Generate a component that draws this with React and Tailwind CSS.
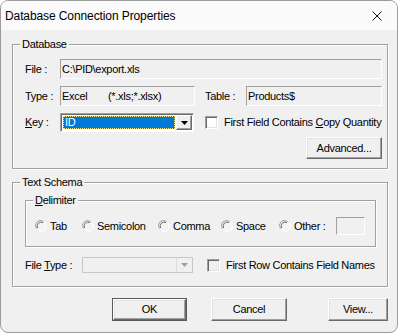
import React from 'react';

const FONT = "font-['Liberation_Sans',Arial,sans-serif]";

function Sunken({ className = '', children }) {
  return (
    <div className={`flex items-center border border-t-[#a0a0a0] border-l-[#a0a0a0] border-b-white border-r-white bg-[#f0f0f0] px-[1px] ${className}`}>
      {children}
    </div>
  );
}

function Button({ label, isDefault, className = '' }) {
  const inner = (
    <div className="flex h-full w-full items-center justify-center border border-t-white border-l-white border-r-[#696969] border-b-[#696969] bg-[#f0f0f0] shadow-[inset_-1px_-1px_0_#a0a0a0,inset_1px_1px_0_#e3e3e3]">
      {label}
    </div>
  );
  if (isDefault) {
    return <div className={`border border-[#5a5a5a] ${className}`}>{inner}</div>;
  }
  return <div className={className}>{inner}</div>;
}

function Check({ disabled }) {
  return (
    <div className={`h-[13px] w-[13px] shrink-0 border border-t-[#a0a0a0] border-l-[#a0a0a0] border-b-white border-r-white shadow-[inset_1px_1px_0_#696969,inset_-1px_-1px_0_#e3e3e3] ${disabled ? 'bg-[#f0f0f0]' : 'bg-white'}`} />
  );
}

function Radio() {
  return (
    <svg width="12" height="12" viewBox="0 0 12 12" className="shrink-0">
      <circle cx="6" cy="6" r="5" fill="#f4f4f4" />
      <path d="M1.5 8.5 A5 5 0 0 1 8.5 1.5" fill="none" stroke="#a0a0a0" strokeWidth="1" />
      <path d="M2.6 8 A4 4 0 0 1 8 2.6" fill="none" stroke="#696969" strokeWidth="1" />
      <path d="M10.5 3.5 A5 5 0 0 1 3.5 10.5" fill="none" stroke="#ffffff" strokeWidth="1" />
    </svg>
  );
}

function Group({ title, className = '', children }) {
  return (
    <div className={`relative border border-[#a0a0a0] shadow-[inset_1px_1px_0_#fff,1px_1px_0_#fff] ${className}`}>
      <span className="absolute left-[7px] top-[-8px] bg-[#f0f0f0] px-[2px] leading-[14px]">{title}</span>
      {children}
    </div>
  );
}

function Arrow({ disabled }) {
  return (
    <div className="flex h-full w-[16px] items-center justify-center border border-t-white border-l-white border-r-[#696969] border-b-[#696969] bg-[#f0f0f0] shadow-[inset_-1px_-1px_0_#a0a0a0]">
      <svg width="7" height="4" viewBox="0 0 7 4">
        <path d="M0 0 H7 L3.5 4 Z" fill={disabled ? '#a0a0a0' : '#000'} />
      </svg>
    </div>
  );
}

export default function App() {
  return (
    <div className={`flex h-[333px] w-[398px] flex-col overflow-hidden rounded-[8px] border border-[#9c9c9c] bg-[#f0f0f0] text-[11px] tracking-[-0.3px] text-black ${FONT}`}>
      {/* title bar */}
      <div className="flex h-[29px] shrink-0 items-center justify-between bg-[#fafafa] pl-[4px] pr-[15px]">
        <span className="text-[12px] tracking-[-0.1px]">Database Connection Properties</span>
        <svg width="10" height="10" viewBox="0 0 10 10">
          <path d="M0.5 0.5 L9.5 9.5 M9.5 0.5 L0.5 9.5" stroke="#1a1a1a" strokeWidth="1" />
        </svg>
      </div>

      <div className="pl-[11px]">
        {/* Database */}
        <Group title="Database" className="mt-[14px] h-[125px] w-[376px] pl-[12px] pt-[14px]">
          <div className="flex h-[20px] items-center">
            <span className="w-[35px]">File :</span>
            <Sunken className="h-[20px] w-[322px]">C:\PID\export.xls</Sunken>
          </div>
          <div className="mt-[7px] flex h-[20px] items-center">
            <span className="w-[35px]">Type :</span>
            <Sunken className="h-[20px] w-[135px]">
              <span className="w-[46px]">Excel</span>
              <span>(*.xls;*.xlsx)</span>
            </Sunken>
            <span className="ml-[10px] w-[41px]">Table :</span>
            <Sunken className="h-[20px] w-[136px]">Products$</Sunken>
          </div>
          <div className="mt-[7px] flex h-[19px] items-center">
            <span className="w-[35px]"><u>K</u>ey :</span>
            <div className="flex h-[19px] w-[134px] border border-t-[#a0a0a0] border-l-[#a0a0a0] border-b-white border-r-white bg-white shadow-[inset_1px_1px_0_#696969]">
              <div className="m-[2px] mr-[1px] flex flex-1 items-center border border-dotted border-[#e8e48a] bg-[#0078d7] pl-[1px] text-white">ID</div>
              <div className="py-[1px] pr-[1px]">
                <Arrow />
              </div>
            </div>
            <div className="ml-[11px] flex items-center">
              <Check />
              <span className="ml-[6px]">First Field Contains <u>C</u>opy Quantity</span>
            </div>
          </div>
          <div className="mt-[5px] flex justify-end pr-[5px]">
            <Button label="Advanced..." className="h-[22px] w-[76px]" />
          </div>
        </Group>

        {/* Text Schema */}
        <Group title="Text Schema" className="mt-[13px] h-[105px] w-[376px] pl-[12px] pt-[17px]">
          <Group title={<span><u>D</u>elimiter</span>} className="h-[47px] w-[351px] pl-[9px] pt-[16px]">
            <div className="flex h-[18px] items-center">
              <div className="flex w-[47px] items-center gap-[3px]"><Radio /><span>Tab</span></div>
              <div className="flex w-[76px] items-center gap-[3px]"><Radio /><span>Semicolon</span></div>
              <div className="flex w-[63px] items-center gap-[3px]"><Radio /><span>Comma</span></div>
              <div className="flex w-[58px] items-center gap-[3px]"><Radio /><span>Space</span></div>
              <div className="flex w-[57px] items-center gap-[3px]"><Radio /><span>Other :</span></div>
              <Sunken className="h-[18px] w-[29px]" />
            </div>
          </Group>
          <div className="mt-[10px] flex h-[16px] items-center">
            <span className="w-[57px]">File <u>T</u>ype :</span>
            <div className="flex h-[16px] w-[111px] justify-end border border-[#c8c8c8] bg-[#f0f0f0]">
              <div className="flex h-full w-[16px] items-center justify-center border-l border-[#dcdcdc]">
                <svg width="7" height="4" viewBox="0 0 7 4">
                  <path d="M0 0 H7 L3.5 4 Z" fill="#a0a0a0" />
                </svg>
              </div>
            </div>
            <div className="ml-[14px] flex items-center">
              <Check disabled />
              <span className="ml-[6px]">First Row Contains Field Names</span>
            </div>
          </div>
        </Group>

        {/* buttons */}
        <div className="mt-[11px] flex h-[23px]">
          <Button label="OK" isDefault className="ml-[100px] h-[23px] w-[75px]" />
          <Button label="Cancel" className="ml-[24px] h-[23px] w-[76px]" />
          <Button label="View..." className="ml-[41px] h-[23px] w-[60px]" />
        </div>
      </div>
    </div>
  );
}
